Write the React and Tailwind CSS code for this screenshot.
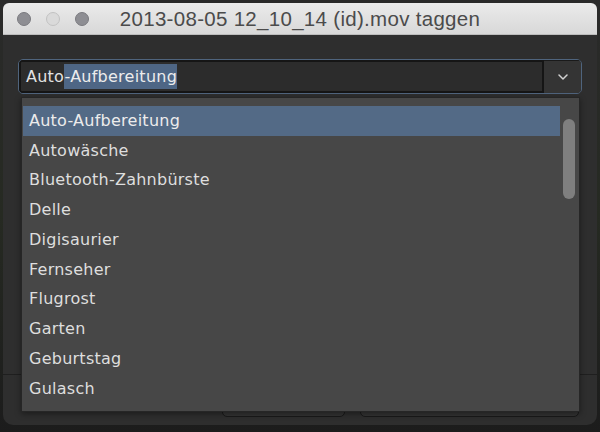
import React from "react";

const tags = [
  "Auto-Aufbereitung",
  "Autowäsche",
  "Bluetooth-Zahnbürste",
  "Delle",
  "Digisaurier",
  "Fernseher",
  "Flugrost",
  "Garten",
  "Geburtstag",
  "Gulasch",
];

function TrafficLights() {
  return (
    <div className="flex items-center gap-[15px] pl-[14px] w-[86px] shrink-0">
      <span className="block w-[14px] h-[14px] rounded-full bg-[#8e8e93] border border-[#7a7a7f]" />
      <span className="block w-[14px] h-[14px] rounded-full bg-[#dadada] border border-[#c2c2c2]" />
      <span className="block w-[14px] h-[14px] rounded-full bg-[#8e8e93] border border-[#7a7a7f]" />
    </div>
  );
}

function ComboBox() {
  return (
    <div className="flex h-[35px] rounded-[5px] border border-[#4f647d] overflow-hidden">
      <div className="flex-1 flex items-center bg-[#2c2c2c] border-2 border-[#151515] rounded-l-[3px] pl-[5px]">
        <span className="text-[16px] tracking-[0.25px] text-[#e2e2e2] leading-none whitespace-pre">
          Auto
          <span className="bg-[#4e6685] text-[#ececec] py-[3px]">-Aufbereitung</span>
        </span>
      </div>
      <div className="w-[37px] flex items-center justify-center bg-[#343434] border-t border-[#1a1a1a]">
        <svg width="10" height="6" viewBox="0 0 10 6">
          <polyline
            points="1,1 5,5 9,1"
            fill="none"
            stroke="#d2d2d2"
            strokeWidth="1.5"
            strokeLinecap="round"
            strokeLinejoin="round"
          />
        </svg>
      </div>
    </div>
  );
}

function TagList() {
  return (
    <div className="absolute left-[18px] top-[62px] w-[559px] h-[315px] bg-[#474747] border border-[#262626] overflow-hidden flex shadow-[0_2px_6px_rgba(0,0,0,0.4)]">
      <div className="w-[538px] pt-[8px] pl-[1px]">
        {tags.map((tag, i) => (
          <div
            key={tag}
            className={
              i === 0
                ? "h-[29.75px] flex items-center pl-[6px] bg-[#536a86] text-[#ececec] text-[16px] tracking-[0.25px]"
                : "h-[29.75px] flex items-center pl-[6px] text-[#dedede] text-[16px] tracking-[0.25px]"
            }
          >
            {tag}
          </div>
        ))}
      </div>
      <div className="flex-1 pl-[3px] pt-[21px]">
        <div className="w-[12px] h-[80px] rounded-full bg-[#7f7f7f]" />
      </div>
    </div>
  );
}

export default function App() {
  return (
    <div
      className="w-[600px] h-[432px] overflow-hidden bg-gradient-to-b from-[#2a2a2a] via-[#262a22] to-[#1c1c1c] pt-[3px] pl-[3px]"
      style={{ fontFamily: '"DejaVu Sans", "Liberation Sans", sans-serif' }}
    >
      <div className="w-[594px] h-[422px] rounded-t-[6px] rounded-b-[10px] overflow-hidden bg-[#2e2e2e] flex flex-col">
        {/* title bar */}
        <div className="h-[32px] shrink-0 flex items-center bg-gradient-to-b from-[#ebebeb] to-[#d8d8d8] border-b border-[#bcbcbc]">
          <TrafficLights />
          <div
            className="flex-1 text-center text-[20.5px] tracking-[0.3px] text-[#4b4b4b] leading-none pt-[1px]"
            style={{ fontFamily: '"Liberation Sans", Arial, sans-serif' }}
          >
            2013-08-05 12_10_14 (id).mov taggen
          </div>
          <div className="w-[86px] shrink-0" />
        </div>

        {/* dialog body */}
        <div className="relative flex-1 flex flex-col pt-[24px] pb-[8px]">
          <div className="px-[15px]">
            <ComboBox />
          </div>
          <div className="flex-1" />
          <div className="h-px bg-[#1f1f1f]" />
          <div className="h-[16px]" />
          <div className="h-[26px] flex pl-[219px] gap-[15px] pr-[18px]">
            <div className="w-[123px] rounded-[5px] bg-[#343434] border border-[#1a1a1a]" />
            <div className="flex-1 rounded-[5px] bg-[#343434] border border-[#1a1a1a]" />
          </div>
          <TagList />
        </div>
      </div>
    </div>
  );
}
